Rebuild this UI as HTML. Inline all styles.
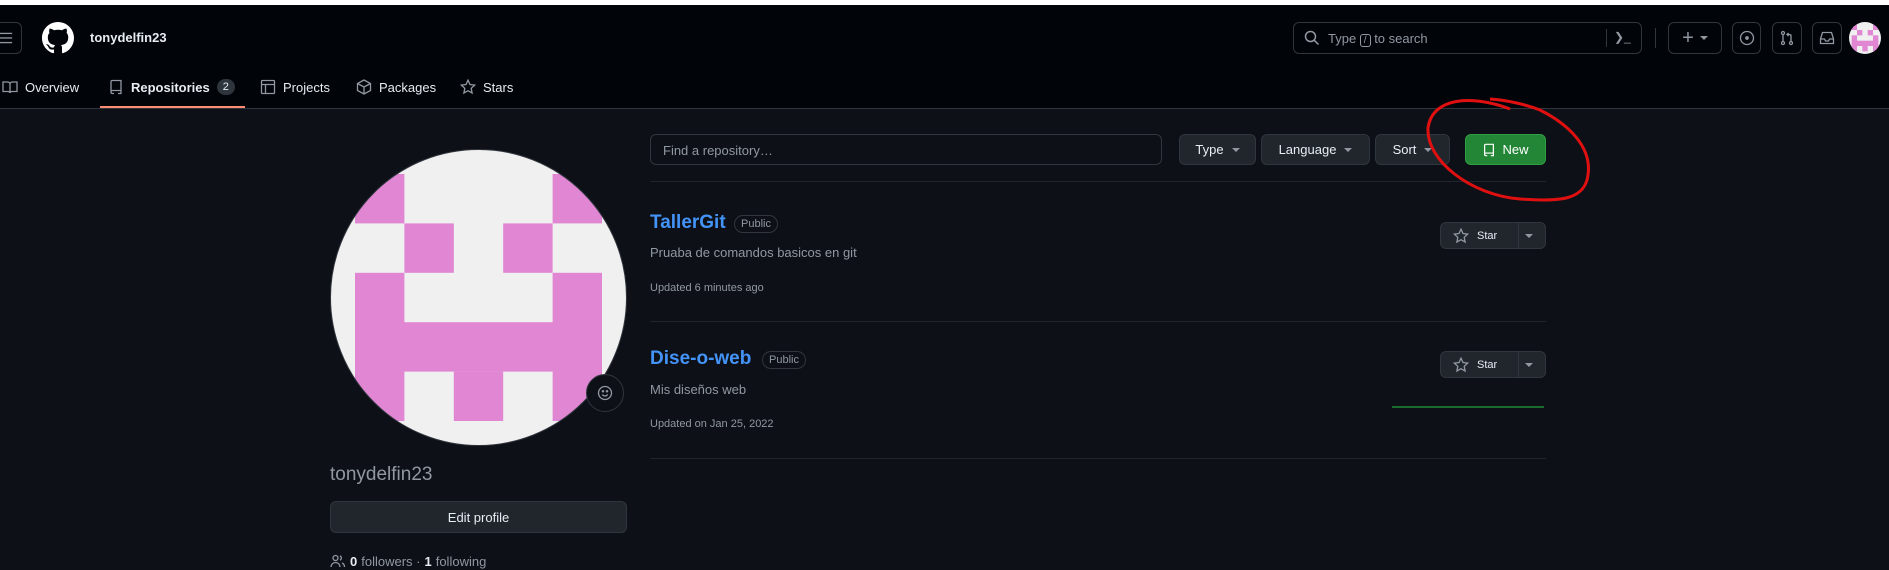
<!DOCTYPE html>
<html><head><meta charset="utf-8"><style>
*{box-sizing:border-box;margin:0;padding:0}
body{width:1889px;height:570px;overflow:hidden;background:#0d1117;font-family:"Liberation Sans",sans-serif;color:#e6edf3;position:relative;font-size:13px}
.a{position:absolute}
.hdr{left:0;top:0;width:1889px;height:109px;background:#010409;border-bottom:1px solid #30363d}
.top{left:0;top:0;width:1889px;height:5px;background:#fff}
.btn{position:absolute;border:1px solid #30363d;border-radius:6px;background:#21262d;display:flex;align-items:center;justify-content:center;font-size:13px;color:#e6edf3}
.ib{position:absolute;border:1px solid #30363d;border-radius:6px;display:flex;align-items:center;justify-content:center}
.tab{position:absolute;top:79px;font-size:13px;color:#e6edf3;display:flex;align-items:center;gap:7px}
.sep{position:absolute;left:650px;width:896px;height:1px;background:#21262d}
.rn{position:absolute;left:650px;font-size:19px;font-weight:bold;color:#4493f8}
.pub{position:absolute;border:1px solid #30363d;border-radius:10px;font-size:11px;color:#9198a1;padding:2px 6px}
.desc{position:absolute;left:650px;font-size:13px;color:#9198a1}
.upd{position:absolute;left:650px;font-size:11px;color:#9198a1}
.caret{display:inline-block;border-left:4px solid transparent;border-right:4px solid transparent;border-top:4px solid #9198a1;margin-left:8px}
svg{display:block}
</style></head><body>
<div class="a hdr"></div>
<div class="a top"></div>
<div class="ib" style="left:-10px;top:22px;width:32px;height:32px"><svg width="14" height="14" viewBox="0 0 16 16" fill="#9198a1"><rect x="1" y="2" width="14" height="1.5"/><rect x="1" y="7.2" width="14" height="1.5"/><rect x="1" y="12.5" width="14" height="1.5"/></svg></div>
<svg class="a" style="left:42px;top:22px" width="32" height="32" viewBox="0 0 16 16" fill="#fff"><path d="M8 0C3.58 0 0 3.58 0 8c0 3.54 2.29 6.53 5.470 7.59.4.07.55-.17.55-.38 0-.19-.01-.82-.01-1.49-2.01.37-2.530-.49-2.690-.94-.09-.23-.48-.94-.82-1.13-.28-.15-.68-.52-.01-.53.63-.01 1.08.58 1.23.82.72 1.21 1.87.87 2.33.66.07-.52.28-.87.51-1.07-1.78-.2-3.64-.89-3.64-3.95 0-.87.31-1.59.82-2.15-.08-.2-.36-1.02.08-2.12 0 0 .67-.21 2.2.82.64-.18 1.32-.27 2-.27.68 0 1.36.09 2 .27 1.53-1.04 2.2-.82 2.2-.82.44 1.1.16 1.92.08 2.12.51.56.82 1.27.82 2.15 0 3.07-1.87 3.75-3.65 3.95.29.25.54.73.54 1.48 0 1.07-.01 1.93-.01 2.2 0 .21.15.46.55.38A8.013 8.013 0 0016 8c0-4.42-3.58-8-8-8z"/></svg>
<div class="a" style="left:90px;top:30px;font-size:13px;font-weight:bold">tonydelfin23</div>

<div class="tab" style="left:2px"><svg width="16" height="16" viewBox="0 0 16 16" fill="none" stroke="#9198a1" stroke-width="1.3"><path d="M1 3h4.5c1.2 0 2.5.8 2.5 2v9c0-1-1-1.5-2-1.5H1zM15 3h-4.5C9.3 3 8 3.8 8 5v9c0-1 1-1.5 2-1.5h5z"/></svg>Overview</div>
<div class="tab" style="left:108px"><svg width="16" height="16" viewBox="0 0 16 16" fill="none" stroke="#9198a1" stroke-width="1.3"><path d="M3 13V2.5C3 2 3.5 1.5 4 1.5h9v10H4.5C3.7 11.5 3 12 3 13s.7 1.5 1.5 1.5H6M10 14.5h3v-3"/></svg><span style="font-weight:600">Repositories</span><span style="background:#2f353d;border-radius:10px;font-size:11px;padding:2px 6px">2</span></div>
<div class="a" style="left:100px;top:106px;width:145px;height:2px;background:#fd8c73"></div>
<div class="tab" style="left:260px"><svg width="16" height="16" viewBox="0 0 16 16" fill="none" stroke="#9198a1" stroke-width="1.3"><rect x="1.5" y="1.5" width="13" height="13" rx="1"/><path d="M1.5 5.5h13M5.5 5.5v9"/></svg>Projects</div>
<div class="tab" style="left:356px"><svg width="16" height="16" viewBox="0 0 16 16" fill="none" stroke="#9198a1" stroke-width="1.3"><path d="M8 1l6.5 3.5v7L8 15l-6.5-3.5v-7zM1.5 4.5L8 8l6.5-3.5M8 8v7"/></svg>Packages</div>
<div class="tab" style="left:460px"><svg width="16" height="16" viewBox="0 0 16 16" fill="none" stroke="#9198a1" stroke-width="1.3"><path d="M8 1.2l2 4.3 4.7.6-3.5 3.2.9 4.7L8 11.7 3.9 14l.9-4.7L1.3 6.1 6 5.5z"/></svg>Stars</div>

<div class="ib" style="left:1293px;top:22px;width:349px;height:32px;justify-content:flex-start;padding-left:10px;color:#9198a1;font-size:13px">
<svg width="16" height="16" viewBox="0 0 16 16" fill="none" stroke="#9198a1" stroke-width="1.5"><circle cx="6.5" cy="6.5" r="5"/><path d="M10.3 10.3L14.5 14.5"/></svg>
<span style="margin-left:8px">Type <span style="border:1px solid #9198a1;border-radius:3px;padding:0 3px;font-size:10px">/</span> to search</span>
<span style="position:absolute;left:312px;top:6px;width:1px;height:18px;background:#30363d"></span>
<span style="position:absolute;left:320px;top:7px;color:#9198a1;font-size:12px">❯_</span></div>
<div class="a" style="left:1655px;top:28px;width:1px;height:20px;background:#30363d"></div>
<div class="ib" style="left:1668px;top:22px;width:54px;height:32px;color:#9198a1;font-size:20px">+<span class="caret" style="margin-left:6px"></span></div>
<div class="ib" style="left:1732px;top:22px;width:29px;height:32px"><svg width="16" height="16" viewBox="0 0 16 16" fill="none" stroke="#9198a1" stroke-width="1.3"><circle cx="8" cy="8" r="6.5"/><circle cx="8" cy="8" r="1.2" fill="#9198a1"/></svg></div>
<div class="ib" style="left:1772px;top:22px;width:30px;height:32px"><svg width="16" height="16" viewBox="0 0 16 16" fill="none" stroke="#9198a1" stroke-width="1.3"><circle cx="4" cy="3" r="1.5"/><circle cx="4" cy="13" r="1.5"/><circle cx="12" cy="13" r="1.5"/><path d="M4 4.5v7M12 11.5V6c0-1-.5-1.5-1.5-1.5H8M9.5 3L8 4.5 9.5 6"/></svg></div>
<div class="ib" style="left:1812px;top:22px;width:30px;height:32px"><svg width="16" height="16" viewBox="0 0 16 16" fill="none" stroke="#9198a1" stroke-width="1.3"><path d="M1.5 9l2-6.5h9l2 6.5v4.5h-13zM1.5 9h4l1 2h3l1-2h4"/></svg></div>
<svg class="a" style="left:1849px;top:22px" width="32" height="32" viewBox="0 0 5 5"><defs><clipPath id="c1"><circle cx="2.5" cy="2.5" r="2.5"/></clipPath></defs><g clip-path="url(#c1)"><rect width="5" height="5" fill="#f0f0f0"/><g fill="#e086d3" transform="translate(.42 .42) scale(.833)"><rect x="0" y="0" width="1" height="1"/><rect x="4" y="0" width="1" height="1"/><rect x="1" y="1" width="1" height="1"/><rect x="3" y="1" width="1" height="1"/><rect x="0" y="2" width="1" height="3"/><rect x="4" y="2" width="1" height="3"/><rect x="0" y="3" width="5" height="1"/><rect x="2" y="4" width="1" height="1"/></g></g></svg>

<svg class="a" style="left:330px;top:149px" width="297" height="297" viewBox="0 0 297 297"><defs><clipPath id="c2"><circle cx="148.5" cy="148.5" r="148"/></clipPath></defs><g clip-path="url(#c2)"><rect width="297" height="297" fill="#f0f0f0"/><g fill="#e086d3" transform="translate(25 25) scale(49.4)"><rect x="0" y="0" width="1" height="1"/><rect x="4" y="0" width="1" height="1"/><rect x="1" y="1" width="1" height="1"/><rect x="3" y="1" width="1" height="1"/><rect x="0" y="2" width="1" height="3"/><rect x="4" y="2" width="1" height="3"/><rect x="0" y="3" width="5" height="1"/><rect x="2" y="4" width="1" height="1"/></g></g><circle cx="148.5" cy="148.5" r="148" fill="none" stroke="#30363d" stroke-width="1"/></svg>
<div class="a" style="left:586px;top:374px;width:38px;height:38px;border-radius:50%;background:#0d1117;border:1px solid #30363d;display:flex;align-items:center;justify-content:center"><svg width="16" height="16" viewBox="0 0 16 16" fill="none" stroke="#9198a1" stroke-width="1.3"><circle cx="8" cy="8" r="6.5"/><path d="M5.3 9.5c.7 1 1.6 1.5 2.7 1.5s2-.5 2.7-1.5"/><circle cx="6" cy="6.3" r=".6" fill="#9198a1"/><circle cx="10" cy="6.3" r=".6" fill="#9198a1"/></svg></div>
<div class="a" style="left:330px;top:464px;font-size:19px;color:#9198a1;font-weight:300">tonydelfin23</div>
<div class="btn" style="left:330px;top:501px;width:297px;height:32px">Edit profile</div>
<div class="a" style="left:330px;top:553px;font-size:13px;color:#9198a1;display:flex;align-items:center;gap:4px"><svg width="16" height="16" viewBox="0 0 16 16" fill="none" stroke="#9198a1" stroke-width="1.3"><circle cx="5.5" cy="5" r="2.5"/><path d="M1 14c0-2.5 2-4.5 4.5-4.5S10 11.5 10 14M10 2.8a2.5 2.5 0 010 4.4M12 10c1.5.6 2.5 2 2.5 4"/></svg><b style="color:#e6edf3">0</b> followers · <b style="color:#e6edf3">1</b> following</div>

<div class="a" style="left:650px;top:134px;width:512px;height:31px;border:1px solid #30363d;border-radius:6px;background:#0d1117;color:#9198a1;padding:8px 12px;font-size:13px">Find a repository…</div>
<div class="btn" style="left:1179px;top:134px;width:77px;height:31px">Type<span class="caret"></span></div>
<div class="btn" style="left:1261px;top:134px;width:109px;height:31px">Language<span class="caret"></span></div>
<div class="btn" style="left:1375px;top:134px;width:75px;height:31px">Sort<span class="caret"></span></div>
<div class="btn" style="left:1465px;top:134px;width:81px;height:31px;background:#238636;border-color:#2ea043;color:#fff"><svg width="14" height="16" viewBox="0 0 16 16" fill="none" stroke="#fff" stroke-width="1.4" style="margin-right:6px"><path d="M3 13V2.5C3 2 3.5 1.5 4 1.5h9v10H4.5C3.7 11.5 3 12 3 13s.7 1.5 1.5 1.5H6M10 14.5h3v-3"/></svg>New</div>
<div class="sep" style="top:181px"></div>

<div class="rn" style="top:212px">TallerGit</div>
<div class="pub" style="left:734px;top:215px">Public</div>
<div class="desc" style="top:245px">Pruaba de comandos basicos en git</div>
<div class="upd" style="top:282px">Updated 6 minutes ago</div>
<div class="btn" style="left:1440px;top:222px;width:106px;height:27px;font-size:11px;justify-content:flex-start;padding-left:12px"><svg width="16" height="16" viewBox="0 0 16 16" fill="none" stroke="#9198a1" stroke-width="1.3"><path d="M8 1.2l2 4.3 4.7.6-3.5 3.2.9 4.7L8 11.7 3.9 14l.9-4.7L1.3 6.1 6 5.5z"/></svg><span style="margin-left:8px">Star</span><span style="position:absolute;left:77px;top:0;width:1px;height:25px;background:#30363d"></span><span class="caret" style="position:absolute;left:84px;top:11px;margin:0"></span></div>
<div class="sep" style="top:321px"></div>

<div class="rn" style="top:348px">Dise-o-web</div>
<div class="pub" style="left:762px;top:351px">Public</div>
<div class="desc" style="top:382px">Mis diseños web</div>
<div class="upd" style="top:418px">Updated on Jan 25, 2022</div>
<div class="btn" style="left:1440px;top:351px;width:106px;height:27px;font-size:11px;justify-content:flex-start;padding-left:12px"><svg width="16" height="16" viewBox="0 0 16 16" fill="none" stroke="#9198a1" stroke-width="1.3"><path d="M8 1.2l2 4.3 4.7.6-3.5 3.2.9 4.7L8 11.7 3.9 14l.9-4.7L1.3 6.1 6 5.5z"/></svg><span style="margin-left:8px">Star</span><span style="position:absolute;left:77px;top:0;width:1px;height:25px;background:#30363d"></span><span class="caret" style="position:absolute;left:84px;top:11px;margin:0"></span></div>
<div class="a" style="left:1392px;top:406px;width:152px;height:2px;background:#196c2e"></div>
<div class="sep" style="top:458px"></div>

<svg class="a" style="left:0;top:0" width="1889" height="570"><path d="M1510 109 C1470 94 1432 98 1428 128 C1426 160 1470 195 1520 199 C1560 202 1585 200 1588 175 C1592 148 1570 125 1540 110 C1525 104 1505 100 1490 99" fill="none" stroke="#e01010" stroke-width="3"/></svg>
</body></html>
